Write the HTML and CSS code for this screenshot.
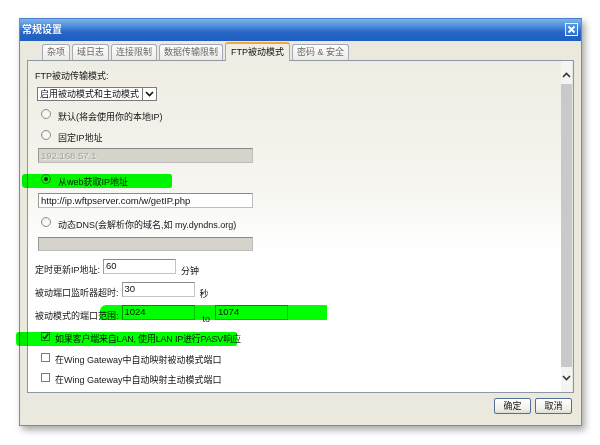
FILE: index.html
```html
<!DOCTYPE html>
<html lang="zh-CN">
<head>
    <meta charset="UTF-8">
    <title>常规设置</title>
    <link rel="stylesheet" href="styles.css">
</head>
<body>
<div class="page">
    <div class="dialog">
        <div class="titlebar">
            <span class="title">常规设置</span>
            <span class="close">
                <svg width="9" height="9" viewBox="0 0 9 9"><path d="M1.5 1.5 L7.5 7.5 M7.5 1.5 L1.5 7.5" stroke="#fff" stroke-width="1.8"/></svg>
            </span>
        </div>
        <div class="dialog-body">
            <div class="tabs">
                <span class="tab">杂项</span>
                <span class="tab">域日志</span>
                <span class="tab">连接限制</span>
                <span class="tab">数据传输限制</span>
                <span class="tab active">FTP被动模式</span>
                <span class="tab">密码 &amp; 安全</span>
            </div>
            <div class="panel">
                <div class="panel-content">
                    <div class="mode-label">FTP被动传输模式:</div>
                    <div class="select">
                        <span class="select-text">启用被动模式和主动模式</span>
                        <span class="select-arrow">
                            <svg width="9" height="6" viewBox="0 0 9 6"><path d="M1 1 L4.5 4.5 L8 1" fill="none" stroke="#111" stroke-width="1.6"/></svg>
                        </span>
                    </div>

                    <div class="option r1"><span class="radio"></span><span class="opt-text">默认(将会使用你的本地IP)</span></div>
                    <div class="option r2"><span class="radio"></span><span class="opt-text">固定IP地址</span></div>
                    <div class="textbox disabled t1">192.168.57.1</div>
                    <div class="option r3"><span class="radio checked"></span><span class="opt-text">从web获取IP地址</span></div>
                    <div class="textbox t2">http://ip.wftpserver.com/w/getIP.php</div>
                    <div class="option r4"><span class="radio"></span><span class="opt-text">动态DNS(会解析你的域名,如 my.dyndns.org)</span></div>
                    <div class="textbox disabled t3"></div>

                    <div class="field f1">
                        <span class="field-label">定时更新IP地址:</span>
                        <span class="num">60</span>
                        <span class="unit">分钟</span>
                    </div>
                    <div class="field f2">
                        <span class="field-label">被动端口监听器超时:</span>
                        <span class="num">30</span>
                        <span class="unit">秒</span>
                    </div>
                    <div class="field f3">
                        <span class="field-label">被动模式的端口范围:</span>
                        <span class="num">1024</span>
                        <span class="unit to">to</span>
                        <span class="num">1074</span>
                    </div>

                    <div class="option check c1"><span class="checkbox checked">
                        <svg width="7" height="7" viewBox="0 0 7 7"><path d="M0.8 3.6 L2.7 5.6 L6.3 1" fill="none" stroke="#222" stroke-width="1.3"/></svg>
                    </span><span class="opt-text narrow">如果客户端来自LAN, 使用LAN IP进行PASV响应</span></div>
                    <div class="option check c2"><span class="checkbox"></span><span class="opt-text">在Wing Gateway中自动映射被动模式端口</span></div>
                    <div class="option check c3"><span class="checkbox"></span><span class="opt-text">在Wing Gateway中自动映射主动模式端口</span></div>
                </div>
                <div class="scrollbar">
                    <div class="scroll-btn up">
                        <svg width="9" height="6" viewBox="0 0 9 6"><path d="M1 5 L4.5 1.5 L8 5" fill="none" stroke="#333" stroke-width="1.6"/></svg>
                    </div>
                    <div class="scroll-track"></div>
                    <div class="scroll-btn down">
                        <svg width="9" height="6" viewBox="0 0 9 6"><path d="M1 1 L4.5 4.5 L8 1" fill="none" stroke="#333" stroke-width="1.6"/></svg>
                    </div>
                </div>
            </div>
            <div class="footer">
                <span class="button">确定</span>
                <span class="button">取消</span>
            </div>
        </div>
    </div>

    <!-- marker strokes drawn over the screenshot -->
    <span class="marker m1"></span>
    <span class="marker m2"></span>
    <span class="marker m3"></span>
</div>
</body>
</html>
```

FILE: styles.css
```css
body {
    margin: 0;
    background-color: #fff;
    font-family: "Liberation Sans", "Noto Sans CJK SC", sans-serif;
    font-size: 9px;
    color: #161616;
}
.page {
    position: relative;
    width: 600px;
    height: 445px;
    overflow: hidden;
}
.dialog {
    box-sizing: border-box;
    width: 563px;
    height: 408px;
    margin: 18px 0 0 19px;
    border: 1px solid #6b8cbf;
    border-top-color: #4a7fd0;
    background-color: #ebe9de;
    box-shadow: 3px 4px 7px rgba(0, 0, 0, 0.35);
    display: flex;
    flex-direction: column;
}

/* title bar */
.titlebar {
    height: 22px;
    display: flex;
    align-items: center;
    justify-content: space-between;
    padding: 0 3px 0 2px;
    background: linear-gradient(#7eb4ea, #4a8ad9 35%, #2766c6 60%, #1e5ec0);
}
.title {
    color: #fff;
    font-size: 10px;
    font-weight: bold;
    margin-top: -3px;
    text-shadow: 0 0 1px rgba(0, 40, 120, 0.6);
}
.close {
    width: 11px;
    height: 11px;
    border: 1px solid #e8f0fb;
    background: linear-gradient(#5b97e4, #2a6fd3);
    display: flex;
    align-items: center;
    justify-content: center;
    margin-top: -2px;
}

.dialog-body {
    flex: 1;
    padding: 1px 7px 0 7px;
    display: flex;
    flex-direction: column;
}

/* tabs */
.tabs {
    display: flex;
    align-items: flex-end;
    gap: 2px;
    height: 19px;
    padding-left: 15px;
    margin-bottom: -1px;
    position: relative;
    z-index: 1;
}
.tab {
    box-sizing: border-box;
    height: 17px;
    line-height: 15px;
    padding: 0 4px;
    border: 1px solid #a3acb8;
    border-bottom-color: #8c97a5;
    border-radius: 3px 3px 0 0;
    background: linear-gradient(#fdfdfc, #eceae2);
    color: #6a6a6a;
    white-space: nowrap;
}
.tab.active {
    height: 19px;
    line-height: 17px;
    border-top: 2px solid #f3a63a;
    border-bottom: none;
    background: #f0eee4;
    color: #111;
    padding: 0 5px;
}

/* panel */
.panel {
    box-sizing: border-box;
    height: 333px;
    border: 1px solid #8c97a5;
    background: linear-gradient(#efede3, #f5f4ee 35%, #ffffff 58%);
    display: flex;
}
.panel-content {
    flex: 1;
    padding-left: 7px;
    display: flex;
    flex-direction: column;
    align-items: flex-start;
}
.mode-label {
    margin-top: 9px;
    line-height: 12px;
}
.select {
    box-sizing: border-box;
    margin: 5px 0 0 2px;
    width: 120px;
    height: 14px;
    border: 1px solid #7a7a7a;
    background: #fff;
    display: flex;
}
.select-text {
    flex: 1;
    line-height: 12px;
    padding-left: 2px;
    color: #111;
    white-space: nowrap;
}
.select-arrow {
    width: 13px;
    border-left: 1px solid #7a7a7a;
    display: flex;
    align-items: center;
    justify-content: center;
}

/* radios and checkboxes */
.option {
    height: 12px;
    display: flex;
    align-items: flex-start;
    margin-left: 6px;
    white-space: nowrap;
}
.opt-text {
    line-height: 12px;
    margin-top: 3px;
    margin-left: 7px;
}
.radio {
    box-sizing: border-box;
    width: 10px;
    height: 10px;
    margin-top: 1px;
    border: 1px solid #8b8b8b;
    border-radius: 50%;
    background: radial-gradient(circle at 60% 60%, #fff, #eceae4);
    display: flex;
    align-items: center;
    justify-content: center;
}
.radio.checked::after {
    content: "";
    width: 4px;
    height: 4px;
    border-radius: 50%;
    background: #222;
}
.r1 { margin-top: 7px; }
.r2 { margin-top: 9px; }
.r3 { margin-top: 10px; }
.r4 { margin-top: 8px; }

.check .opt-text {
    margin-top: 2px;
    margin-left: 5px;
}
.opt-text.narrow {
    letter-spacing: -0.2px;
}
.checkbox {
    box-sizing: border-box;
    width: 9px;
    height: 9px;
    margin-top: 1px;
    border: 1px solid #7b7b7b;
    background: #fff;
    display: flex;
    align-items: center;
    justify-content: center;
}
.c1 { margin-top: 11px; }
.c2 { margin-top: 9px; }
.c3 { margin-top: 8px; }

/* text boxes */
.textbox {
    box-sizing: border-box;
    width: 215px;
    height: 15px;
    margin-left: 3px;
    border: 1px solid #bdbdbd;
    border-top-color: #8a8a8a;
    border-left-color: #9a9a9a;
    background: #fff;
    line-height: 13px;
    padding-left: 2px;
    font-size: 9.5px;
    color: #111;
    white-space: nowrap;
}
.textbox.disabled {
    background: #d6d3cb;
    color: #a9a6a0;
    text-shadow: 1px 1px 0 #eeece6;
}
.t1 { margin-top: 7px; }
.t2 { margin-top: 8px; }
.t3 { margin-top: 9px; height: 14px; }

.field {
    height: 15px;
    display: flex;
    align-items: flex-start;
    white-space: nowrap;
}
.field-label {
    line-height: 12px;
    margin-top: 5px;
    margin-right: 3px;
}
.num {
    box-sizing: border-box;
    width: 73px;
    height: 15px;
    border: 1px solid #c4c4c4;
    border-top-color: #8a8a8a;
    border-left-color: #9a9a9a;
    background: #fff;
    padding-left: 2px;
    line-height: 11px;
    font-size: 9.5px;
    color: #111;
}
.unit {
    line-height: 12px;
    margin-top: 6px;
    margin-left: 5px;
}
.unit.to {
    margin-top: 8px;
    margin-left: 8px;
    margin-right: 5px;
}
.f1 { margin-top: 8px; }
.f2 { margin-top: 8px; }
.f3 { margin-top: 8px; }

/* scrollbar */
.scrollbar {
    width: 11px;
    display: flex;
    flex-direction: column;
    background: #f4f4f2;
    border-right: 1px solid #e6e5de;
}
.scroll-btn {
    display: flex;
    justify-content: center;
}
.scroll-btn.up {
    height: 23px;
    align-items: center;
    padding-top: 4px;
    box-sizing: border-box;
}
.scroll-btn.down {
    height: 25px;
    align-items: flex-start;
    padding-top: 8px;
    box-sizing: border-box;
}
.scroll-track {
    flex: 1;
    background: #c9c9c9;
}

/* footer buttons */
.footer {
    display: flex;
    justify-content: flex-end;
    gap: 4px;
    padding: 5px 2px 0 0;
}
.button {
    box-sizing: border-box;
    width: 37px;
    height: 16px;
    border: 1px solid #52709a;
    border-radius: 2px;
    background: linear-gradient(#ffffff, #f1f0ea 70%, #dedcd2);
    text-align: center;
    line-height: 14px;
    color: #111;
}

/* green marker strokes */
.marker {
    position: absolute;
    background: #00ff00;
    mix-blend-mode: multiply;
    border-radius: 3px 2px 2px 4px;
    filter: blur(0.5px);
}
.m1 { left: 22px; top: 174px; width: 150px; height: 14px; }
.m2 { left: 100px; top: 305px; width: 227px; height: 15px; border-radius: 6px 1px 1px 1px; }
.m3 { left: 16px; top: 332px; width: 221px; height: 14px; }
```
